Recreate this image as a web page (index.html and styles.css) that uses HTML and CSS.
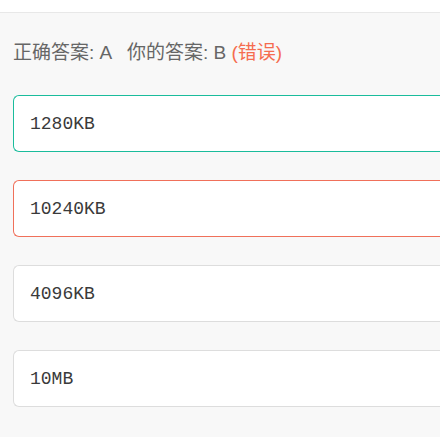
FILE: index.html
```html
<!DOCTYPE html>
<html lang="zh">
<head>
<meta charset="utf-8">
<link rel="stylesheet" href="styles.css">
</head>
<body>
<div class="topbar"></div>
<div class="content">
  <div class="result">正确答案: A &nbsp; 你的答案: B <span class="wrong">(错误)</span></div>
  <div class="options">
    <div class="option correct">1280KB</div>
    <div class="option incorrect">10240KB</div>
    <div class="option">4096KB</div>
    <div class="option">10MB</div>
  </div>
</div>
</body>
</html>
```
FILE: styles.css
```css
html, body {
  margin: 0;
  padding: 0;
  overflow: hidden;
  background: #f8f8f8;
  font-family: "Liberation Sans", "Noto Sans CJK SC", sans-serif;
}
.topbar {
  height: 12px;
  background: #ffffff;
  border-bottom: 1px solid #e8e8e8;
}
.content {
  padding: 28px 0 0 13px;
}
.result {
  font-size: 19px;
  line-height: 24px;
  color: #666666;
}
.wrong {
  color: #f56c4f;
}
.options {
  margin-top: 30px;
  display: flex;
  flex-direction: column;
  gap: 28px;
}
.option {
  box-sizing: border-box;
  height: 57px;
  display: flex;
  align-items: center;
  padding-left: 16px;
  background: #ffffff;
  border: 1px solid #dddddd;
  border-right: none;
  border-radius: 6px 0 0 6px;
  font-family: "Liberation Mono", monospace;
  font-size: 18px;
  color: #3a3a3a;
}
.option.correct {
  border-color: #1abc9c;
}
.option.incorrect {
  border-color: #f0705a;
}
```
